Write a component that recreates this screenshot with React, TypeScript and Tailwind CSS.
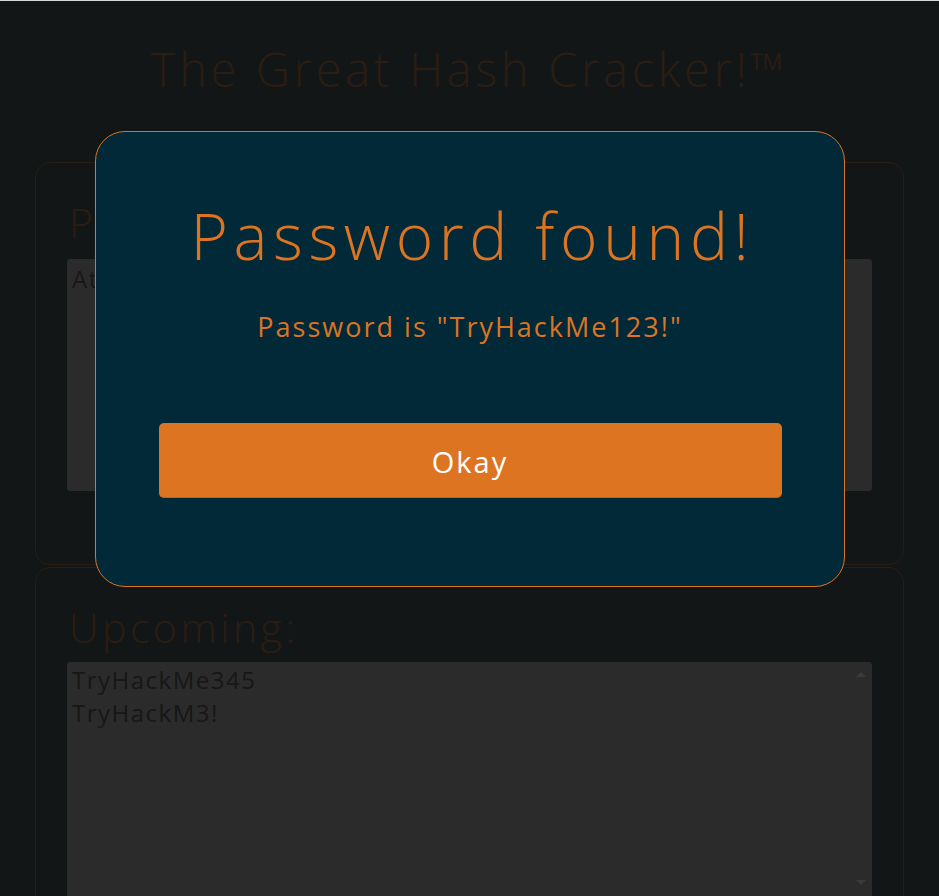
import React from "react";

const F = { fontFamily: '"Open Sans", "Noto Sans", sans-serif' };

export default function App() {
  return (
    <div className="relative w-[939px] h-[896px] overflow-hidden bg-[#131617]" style={F}>
      <div className="h-px bg-[#d9d9d9]" />
      <div className="flex flex-col px-[35px]">
        <h1 className="h-[161px] pt-[36px] text-center text-[47px] leading-[64px] text-[#2a1d13] font-light tracking-[3.7px]">
          The Great Hash Cracker!™
        </h1>
        <div className="flex flex-col gap-[2px]">
          <div className="h-[403px] rounded-[15px] border border-[#2a1d12] px-[31px] pt-[30px]">
            <h2 className="text-[41px] leading-[58px] text-[#2b1d13] font-light pl-[2px] tracking-[3.5px]">Password:</h2>
            <div className="mt-[8px] h-[232px] rounded-[3px] bg-[#2b2b2b] px-[5px] pt-[3px] text-[24px] leading-[33px] text-[#171717] tracking-[1.5px]">
              Attempting...
            </div>
          </div>
          <div className="h-[400px] rounded-[15px] border border-[#2a1d12] px-[31px] pt-[30px]">
            <h2 className="text-[41px] leading-[58px] text-[#2b1d13] font-light pl-[2px] tracking-[3.5px]">Upcoming:</h2>
            <div className="relative mt-[6px] h-[300px] rounded-[3px] bg-[#2b2b2b] px-[5px] pt-[1px] text-[24px] leading-[33px] text-[#171717] tracking-[1.5px]">
              <div>TryHackMe345</div>
              <div>TryHackM3!</div>
              <div className="absolute right-[6px] top-[10px] w-0 h-0 border-l-[5px] border-r-[5px] border-b-[5px] border-l-transparent border-r-transparent border-b-[#3a3a3a]" />
              <div className="absolute right-[6px] top-[218px] w-0 h-0 border-l-[5px] border-r-[5px] border-t-[5px] border-l-transparent border-r-transparent border-t-[#3a3a3a]" />
            </div>
          </div>
        </div>
      </div>

      <div className="absolute left-[95px] top-[131px] w-[750px] h-[456px] rounded-[30px] border border-[#dc7422] bg-[#012937] flex flex-col items-center">
        <div className="mt-[62px] text-[64px] leading-[84px] text-[#dc7422] font-light tracking-[5.6px] pl-[5px]">Password found!</div>
        <div className="mt-[31px] text-[27px] leading-[36px] text-[#dc7422] tracking-[2px]">Password is "TryHackMe123!"</div>
        <button className="mt-[78px] w-[623px] h-[75px] rounded-[5px] bg-[#dc7422] border-b border-[#b9631f] text-white text-[29px] leading-[36px] tracking-[2px] pt-[3px]">
          Okay
        </button>
      </div>
    </div>
  );
}
